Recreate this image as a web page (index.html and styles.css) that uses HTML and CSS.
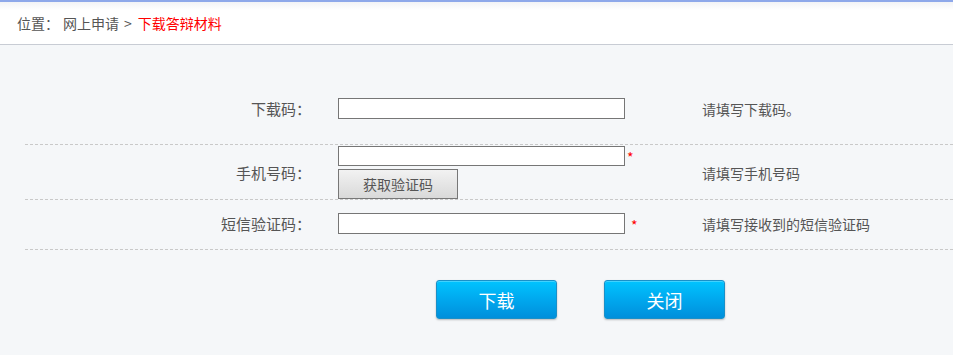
FILE: index.html
```html
<!DOCTYPE html>
<html lang="zh-CN">
<head>
<meta charset="utf-8">
<title>下载答辩材料</title>
<link rel="stylesheet" href="styles.css">
</head>
<body>
<div class="header">
  <div class="crumb">
    <span class="crumb-label">位置：</span>
    <span class="crumb-link">网上申请</span>
    <span class="crumb-sep">&gt;</span>
    <span class="crumb-current">下载答辩材料</span>
  </div>
</div>
<div class="main">
  <div class="form">
    <div class="row row-first">
      <div class="label">下载码：</div>
      <div class="field">
        <input class="text" type="text">
      </div>
      <div class="hint">请填写下载码。</div>
    </div>
    <div class="row row-phone">
      <div class="label">手机号码：</div>
      <div class="field field-stack">
        <div class="line"><input class="text" type="text"><span class="star">*</span></div>
        <button class="code-btn" type="button">获取验证码</button>
      </div>
      <div class="hint">请填写手机号码</div>
    </div>
    <div class="row row-sms">
      <div class="label">短信验证码：</div>
      <div class="field">
        <div class="line"><input class="text" type="text"><span class="star star-gap">*</span></div>
      </div>
      <div class="hint">请填写接收到的短信验证码</div>
    </div>
  </div>
  <div class="actions">
    <button class="btn" type="button">下载</button>
    <button class="btn" type="button">关闭</button>
  </div>
</div>
</body>
</html>
```
FILE: styles.css
```css
* { box-sizing: border-box; }
html, body {
  margin: 0;
  padding: 0;
  height: 100%;
}
body {
  background: #f5f7f9;
  font-family: "Noto Sans CJK SC", "Microsoft YaHei", sans-serif;
  color: #555;
  overflow: hidden;
}
.header {
  height: 45px;
  border-top: 2px solid #8ea8ea;
  background: linear-gradient(#f2f3f6 0, #ffffff 8px, #ffffff 100%);
  border-bottom: 1px solid #c8ccd4;
  padding-left: 17px;
  display: flex;
  align-items: center;
}
.crumb {
  font-size: 14px;
  line-height: 18px;
  color: #555;
  display: flex;
  align-items: center;
}
.crumb-label { margin-right: 4px; }
.crumb-sep { margin: 0 6px 0 5px; }
.crumb-current { color: #ff0000; }

.main {
  padding-left: 25px;
}
.form {
  display: flex;
  flex-direction: column;
}
.row {
  display: grid;
  grid-template-columns: 286px 336px 1fr;
  column-gap: 27px;
  align-items: center;
  border-bottom: 1px dashed #c9c9c9;
}
.row-first { padding: 53px 0 25px; }
.row-phone { padding: 1px 0 0; }
.row-sms { padding: 13px 0 15px; }

.label {
  text-align: right;
  font-size: 15px;
  line-height: 20px;
  color: #555;
  margin-top: 1px;
}
.field {
  display: flex;
  align-items: center;
}
.field-stack {
  flex-direction: column;
  align-items: flex-start;
  gap: 3px;
}
.line {
  display: flex;
  align-items: flex-start;
}
.text {
  width: 287px;
  height: 21px;
  margin: 0;
  padding: 0 3px;
  border: 1px solid #767676;
  background: #fff;
  outline: none;
  font-size: 13px;
}
.row-phone .text { height: 20px; }
.star {
  color: #ff0000;
  font-size: 14px;
  line-height: 16px;
  margin-left: 2px;
  margin-top: 3px;
}
.star-gap { margin-left: 6px; margin-top: 4px; }
.code-btn {
  width: 120px;
  height: 30px;
  margin: 0;
  padding: 0;
  border: 1px solid #777;
  background: linear-gradient(#f2f2f2, #d9d9d9);
  font-family: inherit;
  font-size: 14px;
  color: #555;
}
.hint {
  font-size: 14px;
  line-height: 18px;
  color: #555;
  padding-left: 1px;
}

.actions {
  display: flex;
  gap: 47px;
  padding: 30px 0 0 411px;
}
.btn {
  width: 121px;
  height: 39px;
  margin: 0;
  padding: 0;
  border: 1px solid #1a90c8;
  border-radius: 3px;
  background: linear-gradient(#00c4ff 0%, #00a8ee 50%, #008fdb 100%);
  box-shadow: 0 1px 2px rgba(0,0,0,0.25), inset 0 1px 0 rgba(255,255,255,0.25);
  color: #fff;
  font-family: inherit;
  font-size: 18px;
  cursor: pointer;
}
```
